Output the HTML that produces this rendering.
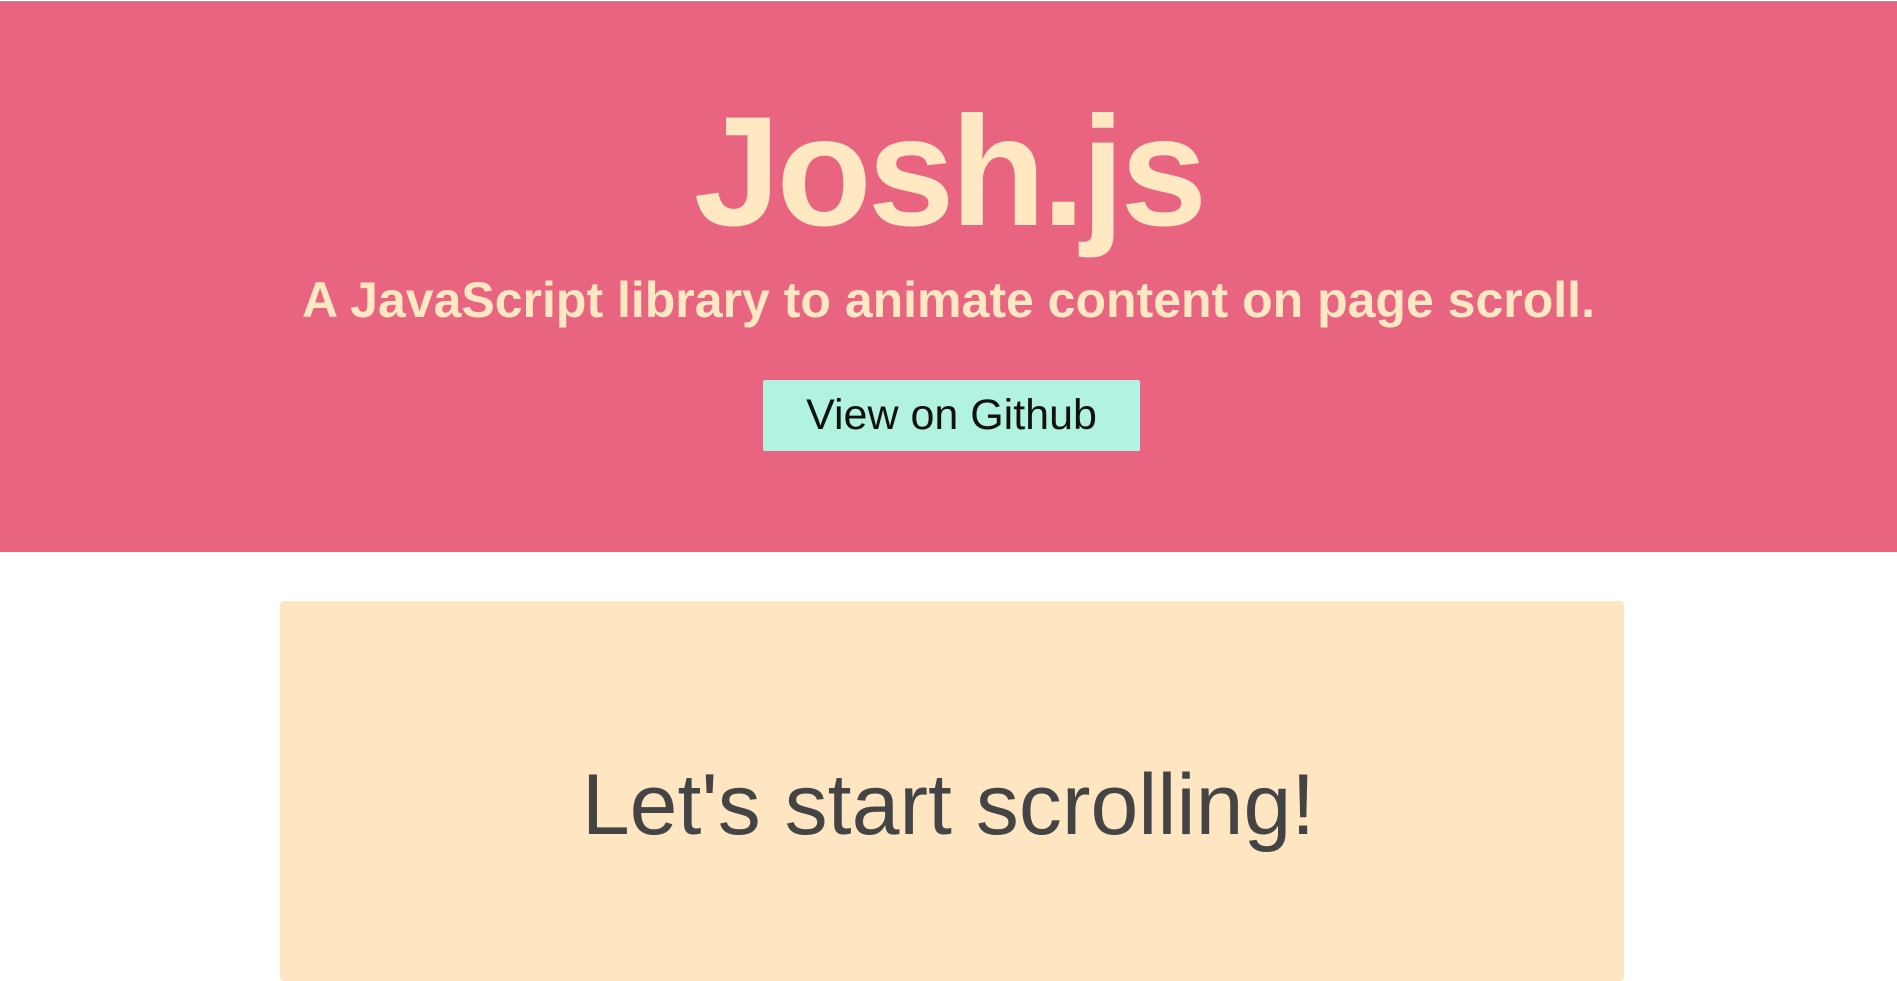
<!DOCTYPE html>
<html><head><meta charset="utf-8"><style>
html,body{margin:0;padding:0;width:1897px;height:959px;overflow:hidden;background:#fff;font-family:"Liberation Sans",sans-serif;}
.hdr{position:absolute;left:0;top:1px;width:1897px;height:550px;background:#e96481;border-top:1px solid #999;}
h1{position:absolute;left:0;width:1897px;top:94px;margin:0;text-align:center;font-size:156px;font-weight:bold;color:#ffe8c2;line-height:1;letter-spacing:-4px;}
.sub{position:absolute;left:0;width:1897px;top:275px;text-align:center;font-size:50px;font-weight:bold;color:#ffe8c2;line-height:1;}
.btn{position:absolute;left:763px;top:380px;width:377px;height:71px;background:#b2f2e0;border-radius:2px;text-align:center;line-height:71px;font-size:43px;color:#111;}
.box{position:absolute;left:280px;top:601px;width:1344px;height:380px;background:#fee6c3;border-radius:4px;}
.lt{position:absolute;left:0;width:1897px;top:762px;text-align:center;font-size:86px;color:#444;line-height:1;}
</style></head><body>
<div class="hdr"></div>
<h1>Josh.js</h1>
<div class="sub">A JavaScript library to animate content on page scroll.</div>
<div class="btn">View on Github</div>
<div class="box"></div>
<div class="lt">Let's start scrolling!</div>
</body></html>
